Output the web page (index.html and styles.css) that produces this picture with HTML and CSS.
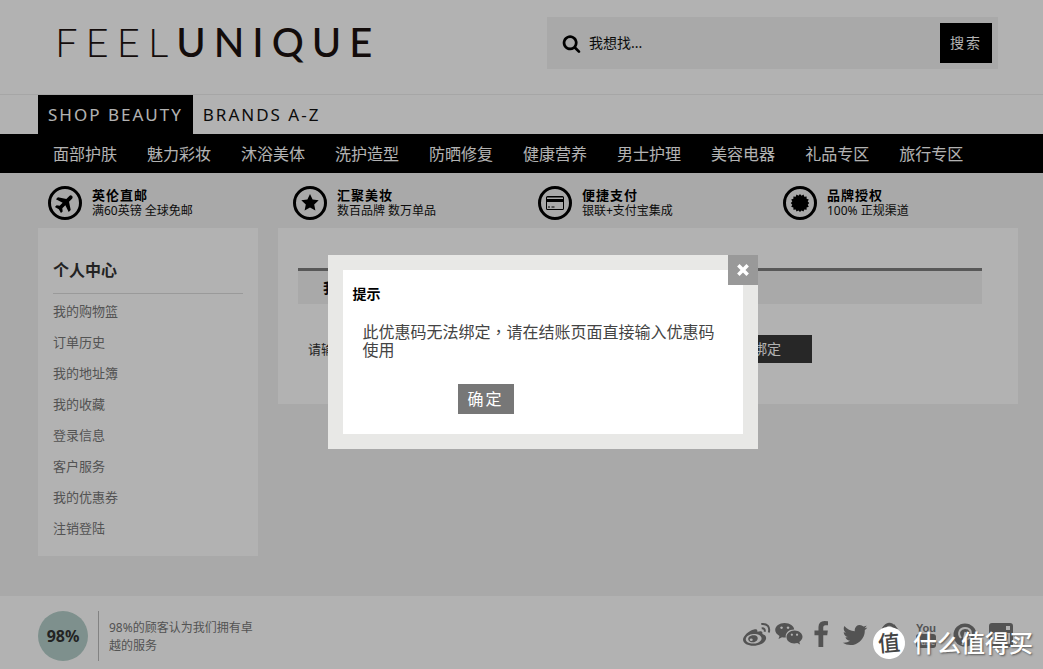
FILE: index.html
```html
<!DOCTYPE html>
<html lang="zh-CN">
<head>
<meta charset="utf-8">
<title>Feelunique</title>
<link rel="stylesheet" href="styles.css">
</head>
<body>
<header class="header">
  <div class="wrap top">
    <a class="logo" href="#"><span class="logo-thin">FEEL</span><span class="logo-bold">UNIQUE</span></a>
    <form class="search">
      <svg class="search-icon" viewBox="0 0 1792 1792"><path d="M1216 832q0-185-131.500-316.500t-316.500-131.500-316.500 131.500-131.500 316.500 131.500 316.500 316.500 131.500 316.500-131.500 131.500-316.500zm512 832q0 52-38 90t-90 38q-54 0-90-38l-343-342q-179 124-399 124-143 0-273.500-55.500t-225-150-150-225-55.500-273.500 55.500-273.500 150-225 225-150 273.500-55.500 273.500 55.500 225 150 150 225 55.500 273.500q0 220-124 399l343 343q37 37 37 90z"/></svg>
      <input class="search-input" type="text" placeholder="我想找..." aria-label="搜索商品">
      <button class="search-btn" type="button">搜索</button>
    </form>
  </div>
  <div class="tabs-row"><nav class="wrap tabs">
    <a class="tab tab-active" href="#">SHOP BEAUTY</a>
    <a class="tab" href="#">BRANDS A-Z</a>
  </nav></div>
  <div class="nav-row"><nav class="wrap nav">
    <a href="#">面部护肤</a><a href="#">魅力彩妆</a><a href="#">沐浴美体</a><a href="#">洗护造型</a><a href="#">防晒修复</a><a href="#">健康营养</a><a href="#">男士护理</a><a href="#">美容电器</a><a href="#">礼品专区</a><a href="#">旅行专区</a>
  </nav></div>
</header>

<main class="wrap">
  <div class="benefits">
    <div class="benefit">
      <svg class="badge" viewBox="0 0 34 34"><circle cx="17" cy="17" r="15.500"/><path transform="translate(17 17) rotate(45) scale(.95) translate(-11.500 -12)" d="M21 16v-3l-7.500-5V3.500c0-1.200-.9-2-2-2s-2 .8-2 2V8L2 13v3l7.500-2.500V18l-2.500 2v2.500l4.500-1.300 4.500 1.300V20l-2.500-2v-4.500z"/></svg>
      <div><strong>英伦直邮</strong><span>满60英镑 全球免邮</span></div>
    </div>
    <div class="benefit">
      <svg class="badge" viewBox="0 0 34 34"><circle cx="17" cy="17" r="15.500"/><path d="M17 8l2.600 5.600 6.100.7-4.500 4.100 1.200 6.100-5.400-3-5.400 3 1.200-6.100-4.500-4.100 6.100-.7z"/></svg>
      <div><strong>汇聚美妆</strong><span>数百品牌 数万单品</span></div>
    </div>
    <div class="benefit">
      <svg class="badge" viewBox="0 0 34 34"><circle cx="17" cy="17" r="15.500"/><path fill-rule="evenodd" d="M9.500 10h15q1.500 0 1.500 1.500v11q0 1.500-1.500 1.500h-15Q8 24 8 22.500v-11Q8 10 9.500 10zM9 11.500V13h16v-1.500zM9 16v6.500q0 .5.500.5h15q.5 0 .5-.5V16zM10 20.500h2v1h-2zM13.500 20.500h3v1h-3z"/></svg>
      <div><strong>便捷支付</strong><span>银联+支付宝集成</span></div>
    </div>
    <div class="benefit">
      <svg class="badge" viewBox="0 0 34 34"><circle cx="17" cy="17" r="15.500"/><path d="M17 8l1.500 1.700 2-1.100.8 2.100 2.300-.3v2.300l2.200.8-1.100 2 1.500 1.500-1.500 1.700 1.100 2-2.200.8v2.300l-2.300-.3-.8 2.100-2-1.100L17 26l-1.500-1.500-2 1.100-.8-2.100-2.300.3v-2.300l-2.200-.8 1.100-2L7.800 17l1.500-1.500-1.100-2 2.200-.8v-2.300l2.300.3.8-2.100 2 1.100z"/></svg>
      <div><strong>品牌授权</strong><span>100% 正规渠道</span></div>
    </div>
  </div>

  <div class="columns">
    <aside class="sidebar">
      <h2>个人中心</h2>
      <ul>
        <li><a href="#">我的购物篮</a></li>
        <li><a href="#">订单历史</a></li>
        <li><a href="#">我的地址簿</a></li>
        <li><a href="#">我的收藏</a></li>
        <li><a href="#">登录信息</a></li>
        <li><a href="#">客户服务</a></li>
        <li><a href="#">我的优惠券</a></li>
        <li><a href="#">注销登陆</a></li>
      </ul>
    </aside>
    <section class="panel">
      <h3>我的优惠券</h3>
      <form class="bind">
        <label for="code">请输入优惠码</label>
        <input id="code" type="text">
        <button type="button">绑定</button>
      </form>
    </section>
  </div>
</main>

<footer class="footer">
  <div class="wrap footer-inner">
    <div class="score">98%</div>
    <p class="score-text">98%的顾客认为我们拥有卓越的服务</p>
    <div class="social">
      <a class="slim" href="#" aria-label="微博"><svg viewBox="0 0 28 28"><path fill-rule="evenodd" d="M11 8.500c2-.8 3.800-.3 3.300 2.300 3-1.300 6-.8 5 2.300 6 1.500 4.500 7.500-1 10-8 3.800-18 1-18.300-4.300C0 15 6 9.500 11 8.500zM10.500 13C5.500 13.300 2.500 16 2.800 18.800c.3 2.500 4 4 8.200 3.700 5-.4 8-3 7.500-5.700-.4-2.500-4-4-8-3.800z"/><path fill-rule="evenodd" d="M10.500 14.200c3.200-.2 5 2 4 4.300-1 2.400-4.500 3.500-7 2.500-2.600-1-3-3.500-1.500-5.200 1-1 2.800-1.600 4.500-1.600zM8.200 17.500a1.500 1.300 0 1 0 .1 2.600 1.500 1.300 0 0 0-.1-2.600z"/><path class="line" d="M18.300 3c6-.8 9 3 7.500 8.500M18.700 7.300c2.500-.2 3.500 1.200 2.900 3.500"/></svg></a>
      <a class="slim" href="#" aria-label="微信"><svg viewBox="0 0 28 28"><path fill-rule="evenodd" d="M9.500 2C15 2 19 5 19.200 8.500c-5-.2-9.200 3.200-8.400 8-1.300.1-2.300 0-3.800-.3L3.500 18l1-3C1.600 13.200.2 11.200.2 9 .2 5 4.500 2 9.500 2zM6.500 5.400a1.300 1.300 0 1 0 .1 0zM13 5.400a1.300 1.300 0 1 0 .1 0z"/><path fill-rule="evenodd" d="M19.500 9.500c4.500 0 8 3 8 6.300 0 2-1.200 3.800-3.200 5.200l.8 2.500-2.800-1.500c-6 1.500-10.800-1.500-10.800-6 0-3.500 3.500-6.500 8-6.500zM16.800 12.600a1.100 1.100 0 1 0 .1 0zM22 12.600a1.100 1.100 0 1 0 .1 0z"/></svg></a>
      <a class="slim" href="#" aria-label="Facebook"><svg viewBox="0 0 1792 1792"><path d="M1343 12v264h-157q-86 0-116 36t-30 108v189h293l-39 296h-254v759H734V905H479V609h255V391q0-186 104-288.500T1115 0q147 0 228 12z"/></svg></a>
      <a href="#" aria-label="Twitter"><svg viewBox="0 0 1792 1792"><path d="M1684 408q-67 98-162 167 1 14 1 42 0 130-38 259.500t-115.500 248.500-184.500 210.500-258 146-323 54.500q-271 0-496-145 35 4 78 4 225 0 401-138-105-2-188-64.500t-114-159.500q33 5 61 5 43 0 85-11-112-23-185.500-111.500t-73.500-205.500v-4q68 38 146 41-66-44-105-115t-39-154q0-88 44-163 121 149 294.500 238.500t371.500 99.500q-8-38-8-74 0-134 94.500-228.500t228.500-94.500q140 0 236 102 109-21 205-78-37 115-142 178 93-10 186-50z"/></svg></a>
      <a class="slim" href="#" aria-label="Google+"><svg viewBox="0 0 28 28"><path class="thick" d="M8 8q6-9 12-1M12 13c4 3 7 4 5 7-3 4-9 2-8-1 1-2 3-3 6-3"/><path d="M19 3l4 5h-4z"/></svg></a>
      <a class="wide" href="#" aria-label="YouTube"><svg viewBox="0 0 28 28"><text class="yt" x="14" y="11">You</text><rect x="4" y="13" width="20" height="14" rx="3"/><text class="yt yt-light" x="14" y="24">Tube</text></svg></a>
      <a href="#" aria-label="Pinterest"><svg viewBox="0 0 28 28"><circle cx="14" cy="14" r="11.500"/><path class="cut" d="M10 17c-4-5-1-10 4-10 6 0 7 5 5 9-2 3-5 2-5.500 0M14.500 11l-3 13"/></svg></a>
      <a href="#" aria-label="Instagram"><svg viewBox="0 0 28 28"><path fill-rule="evenodd" d="M5 2h18q3 0 3 3v18q0 3-3 3H5q-3 0-3-3V5q0-3 3-3zM19 5v4h4V5zM5 12v10q0 1 1 1h16q1 0 1-1V12h-3a7 7 0 1 1-12 0z"/></svg></a>
    </div>
  </div>
</footer>

<div class="overlay"></div>

<div class="dialog" role="dialog" aria-labelledby="dialog-title">
  <button class="close" type="button" aria-label="关闭"><svg viewBox="0 0 12 12"><path d="M2 2l8 8M10 2l-8 8"/></svg></button>
  <h2 id="dialog-title">提示</h2>
  <p>此优惠码无法绑定<span class="comma" lang="zh-TW">，</span>请在结账页面直接输入优惠码使用</p>
  <button class="confirm" type="button">确定</button>
</div>

<div class="watermark"><span class="seal">值</span><span>什么值得买</span></div>
</body>
</html>
```

FILE: styles.css
```css
* { box-sizing: border-box; }
body {
  margin: 0;
  min-height: 100vh;
  display: flex;
  flex-direction: column;
  position: relative;
  background: #f2f2f2;
  color: #111;
  font: 14px/18px "Noto Sans", "Noto Sans CJK SC", sans-serif;
}
a { color: inherit; text-decoration: none; }
h2, h3, p, ul { margin: 0; padding: 0; }
ul { list-style: none; }
button, input { font: inherit; border: 0; border-radius: 0; padding: 0; }
.wrap { padding-left: 38px; padding-right: 25px; }

.header { background: #fff; }
.top { display: flex; justify-content: space-between; height: 94px; padding-right: 45px; }
.logo { padding: 16px 0 0 17px; color: #1c1210; font: 40px/52px Lato, sans-serif; white-space: nowrap; }
.logo-thin { font-weight: 300; letter-spacing: 8px; }
.logo-bold { font-weight: 500; letter-spacing: 8px; }
.search {
  display: flex;
  align-items: center;
  width: 451px;
  height: 52px;
  margin-top: 17px;
  padding: 6px 6px 6px 15px;
  background: #f2f2f2;
}
.search-icon { width: 19px; height: 19px; margin-right: 8px; }
.search-input { flex: 1; min-width: 0; background: none; }
.search-input::placeholder { color: #111; opacity: 1; }
.search-btn { width: 52px; height: 40px; background: #000; color: #fff; letter-spacing: 2px; }

.tabs-row { border-top: 1px solid #eee; }
.tabs { display: flex; }
.tab { padding: 0 10px; font-size: 17px; line-height: 39px; letter-spacing: 2px; }
.tab-active { background: #000; color: #fff; }
.nav-row { background: #000; }
.nav { display: flex; padding-top: 2px; color: #fff; font-size: 16px; line-height: 37px; }
.nav a { padding: 0 15px; white-space: nowrap; }

.benefits { display: grid; grid-template-columns: repeat(4, 1fr); height: 55px; }
.benefit { display: flex; align-items: center; gap: 10px; padding: 5px 0 0 10px; }
.benefit strong, .benefit span { display: block; line-height: 15px; }
.benefit strong { font-size: 13px; letter-spacing: 1px; color: #000; }
.benefit span { font-size: 12px; }
.badge { width: 34px; height: 34px; }
.badge circle { fill: none; stroke: #000; stroke-width: 3; }

.columns { display: flex; align-items: flex-start; gap: 20px; margin-bottom: 40px; }
.sidebar { width: 220px; padding: 24px 15px 12px; background: #fff; }
.sidebar h2 { padding-bottom: 5px; border-bottom: 1px solid #ddd; color: #333; font-size: 16px; line-height: 36px; }
.sidebar ul { padding-top: 2px; }
.sidebar li { color: #777; font-size: 13px; line-height: 31px; }
.panel { flex: 1; padding: 40px 36px 41px 20px; background: #fff; }
.panel h3 { padding-left: 25px; border-top: 3px solid #7f7f7f; background: #f2f2f2; font-size: 14px; line-height: 33px; }
.bind { display: flex; align-items: center; gap: 10px; margin-top: 31px; padding-left: 10px; }
.bind label { font-size: 13px; color: #333; }
.bind input { width: 316px; height: 28px; border: 1px solid #ccc; }
.bind button { width: 90px; height: 28px; background: #393939; color: #fff; }

.footer { flex: 1; background: #fff; }
.footer-inner { display: flex; align-items: flex-start; padding-top: 15px; }
.score { width: 50px; height: 50px; border-radius: 50%; background: #b5cfca; color: #333; font-size: 16px; font-weight: 700; line-height: 50px; text-align: center; }
.score-text { width: 160px; height: 50px; margin-left: 10px; padding: 8px 0 0 10px; border-left: 1px solid #bbb; color: #777; font-size: 12px; }
.social { display: flex; gap: 6px; margin: 10px 2px 0 auto; }
.social a { display: flex; justify-content: center; width: 30px; }
.social .slim { width: 26px; }
.social .wide { width: 36px; }
.social svg { flex: none; width: 28px; height: 28px; fill: #777; overflow: visible; }
.social .line { fill: none; stroke: #777; stroke-width: 2; }
.social .thick { fill: none; stroke: #777; stroke-width: 3; }
.social .cut { fill: none; stroke: #fff; stroke-width: 2; }
.yt { font: 700 11px "Liberation Sans Narrow", "Liberation Sans", sans-serif; text-anchor: middle; }
.yt-light { fill: #fff; font-size: 8px; }

.overlay { position: absolute; inset: 0; background: rgba(0, 0, 0, .3); }
.dialog {
  position: absolute;
  top: 255px;
  left: calc(50% - 194px);
  width: 430px;
  padding: 15px 10px 20px;
  border: 15px solid #e8e8e6;
  background: #fff;
}
.dialog h2 { color: #000; font-size: 14px; line-height: 18px; }
.dialog p { padding: 20px 10px 0; color: #444; font-size: 16px; }
.comma { font-family: "Noto Sans", "Noto Sans CJK TC", sans-serif; }
.confirm { display: block; width: 56px; height: 30px; margin: 25px 0 0 105px; background: #777; color: #fff; font-size: 16px; letter-spacing: 2px; }
.close { position: absolute; top: -15px; right: -15px; display: grid; place-items: center; width: 30px; height: 30px; background: #999; }
.close svg { width: 14px; height: 14px; stroke: #fff; stroke-width: 3; }

.watermark { position: absolute; right: 10px; bottom: 10px; display: flex; align-items: center; gap: 8px; color: #fff; font-size: 24px; line-height: 32px; font-weight: 500; white-space: nowrap; text-shadow: 1px 1px 2px #555; }
.seal { width: 32px; height: 32px; border-radius: 50%; background: #fff; color: #444; font-size: 22px; line-height: 30px; text-align: center; text-shadow: none; transform: rotate(-5deg); }
```
